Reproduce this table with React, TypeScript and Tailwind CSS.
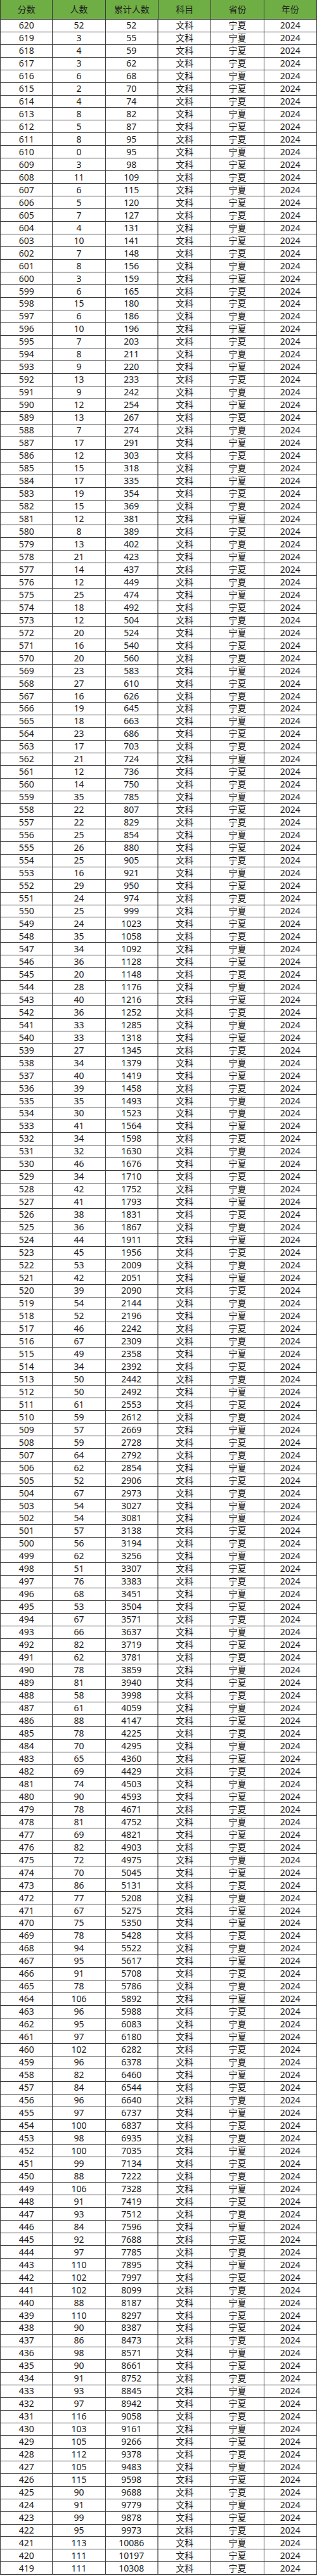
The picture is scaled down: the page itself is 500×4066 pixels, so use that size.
/** 宁夏 2024 文科 一分一段表 */

const COUNTS = [
  52, 3, 4, 3, 6, 2, 4, 8, 5, 8, 0, 3, 11, 6, 5, 7, 4, 10, 7, 8, 3, 6, 15, 6, 10, 7, 8, 9, 13, 9, 12, 13, 7, 17, 12, 15,
  17, 19, 15, 12, 8, 13, 21, 14, 12, 25, 18, 12, 20, 16, 20, 23, 27, 16, 19, 18, 23, 17, 21, 12, 14, 35, 22, 22, 25, 26,
  25, 16, 29, 24, 25, 24, 35, 34, 36, 20, 28, 40, 36, 33, 33, 27, 34, 40, 39, 35, 30, 41, 34, 32, 46, 34, 42, 41, 38, 36,
  44, 45, 53, 42, 39, 54, 52, 46, 67, 49, 34, 50, 50, 61, 59, 57, 59, 64, 62, 52, 67, 54, 54, 57, 56, 62, 51, 76, 68, 53,
  67, 66, 82, 62, 78, 81, 58, 61, 88, 78, 70, 65, 69, 74, 90, 78, 81, 69, 82, 72, 70, 86, 77, 67, 75, 78, 94, 95, 91, 78,
  106, 96, 95, 97, 102, 96, 82, 84, 96, 97, 100, 98, 100, 99, 88, 106, 91, 93, 84, 92, 97, 110, 102, 102, 88, 110, 90, 86,
  98, 90, 91, 93, 97, 116, 103, 105, 112, 105, 115, 90, 91, 99, 95, 113, 111, 111,
]

const HEADERS = ['分数', '人数', '累计人数', '科目', '省份', '年份']

let running = 0
const ROWS = COUNTS.map((n, i) => {
  running += n
  return [String(620 - i), String(n), String(running), '文科', '宁夏', '2024']
})

export default function App() {
  return (
    <div
      className="w-[500px] bg-white text-[14px] text-[#1c1c1c]"
      style={{ fontFamily: '"Noto Sans", "Noto Sans CJK SC", sans-serif' }}
    >
      <div className="grid h-[30.7px] grid-cols-6 border-b border-[#3a3a3a] bg-[#6fae44]">
        {HEADERS.map((h, c) => (
          <div
            key={h}
            className={`flex items-center justify-center border-r border-[#3a3a3a] leading-none text-[#222] ${c === 0 ? 'border-l' : ''}`}
          >
            {h}
          </div>
        ))}
      </div>
      {ROWS.map((row) => (
        <div key={row[0]} className="grid h-[19.97px] grid-cols-6 border-b border-[#3a3a3a]">
          {row.map((v, c) => (
            <div
              key={c}
              className={`flex items-center justify-center leading-none ${
                c === 2 ? 'border-r-2 border-[#8a8a8a]' : 'border-r border-[#3a3a3a]'
              } ${c === 0 ? 'border-l' : ''}`}
            >
              {v}
            </div>
          ))}
        </div>
      ))}
    </div>
  )
}
